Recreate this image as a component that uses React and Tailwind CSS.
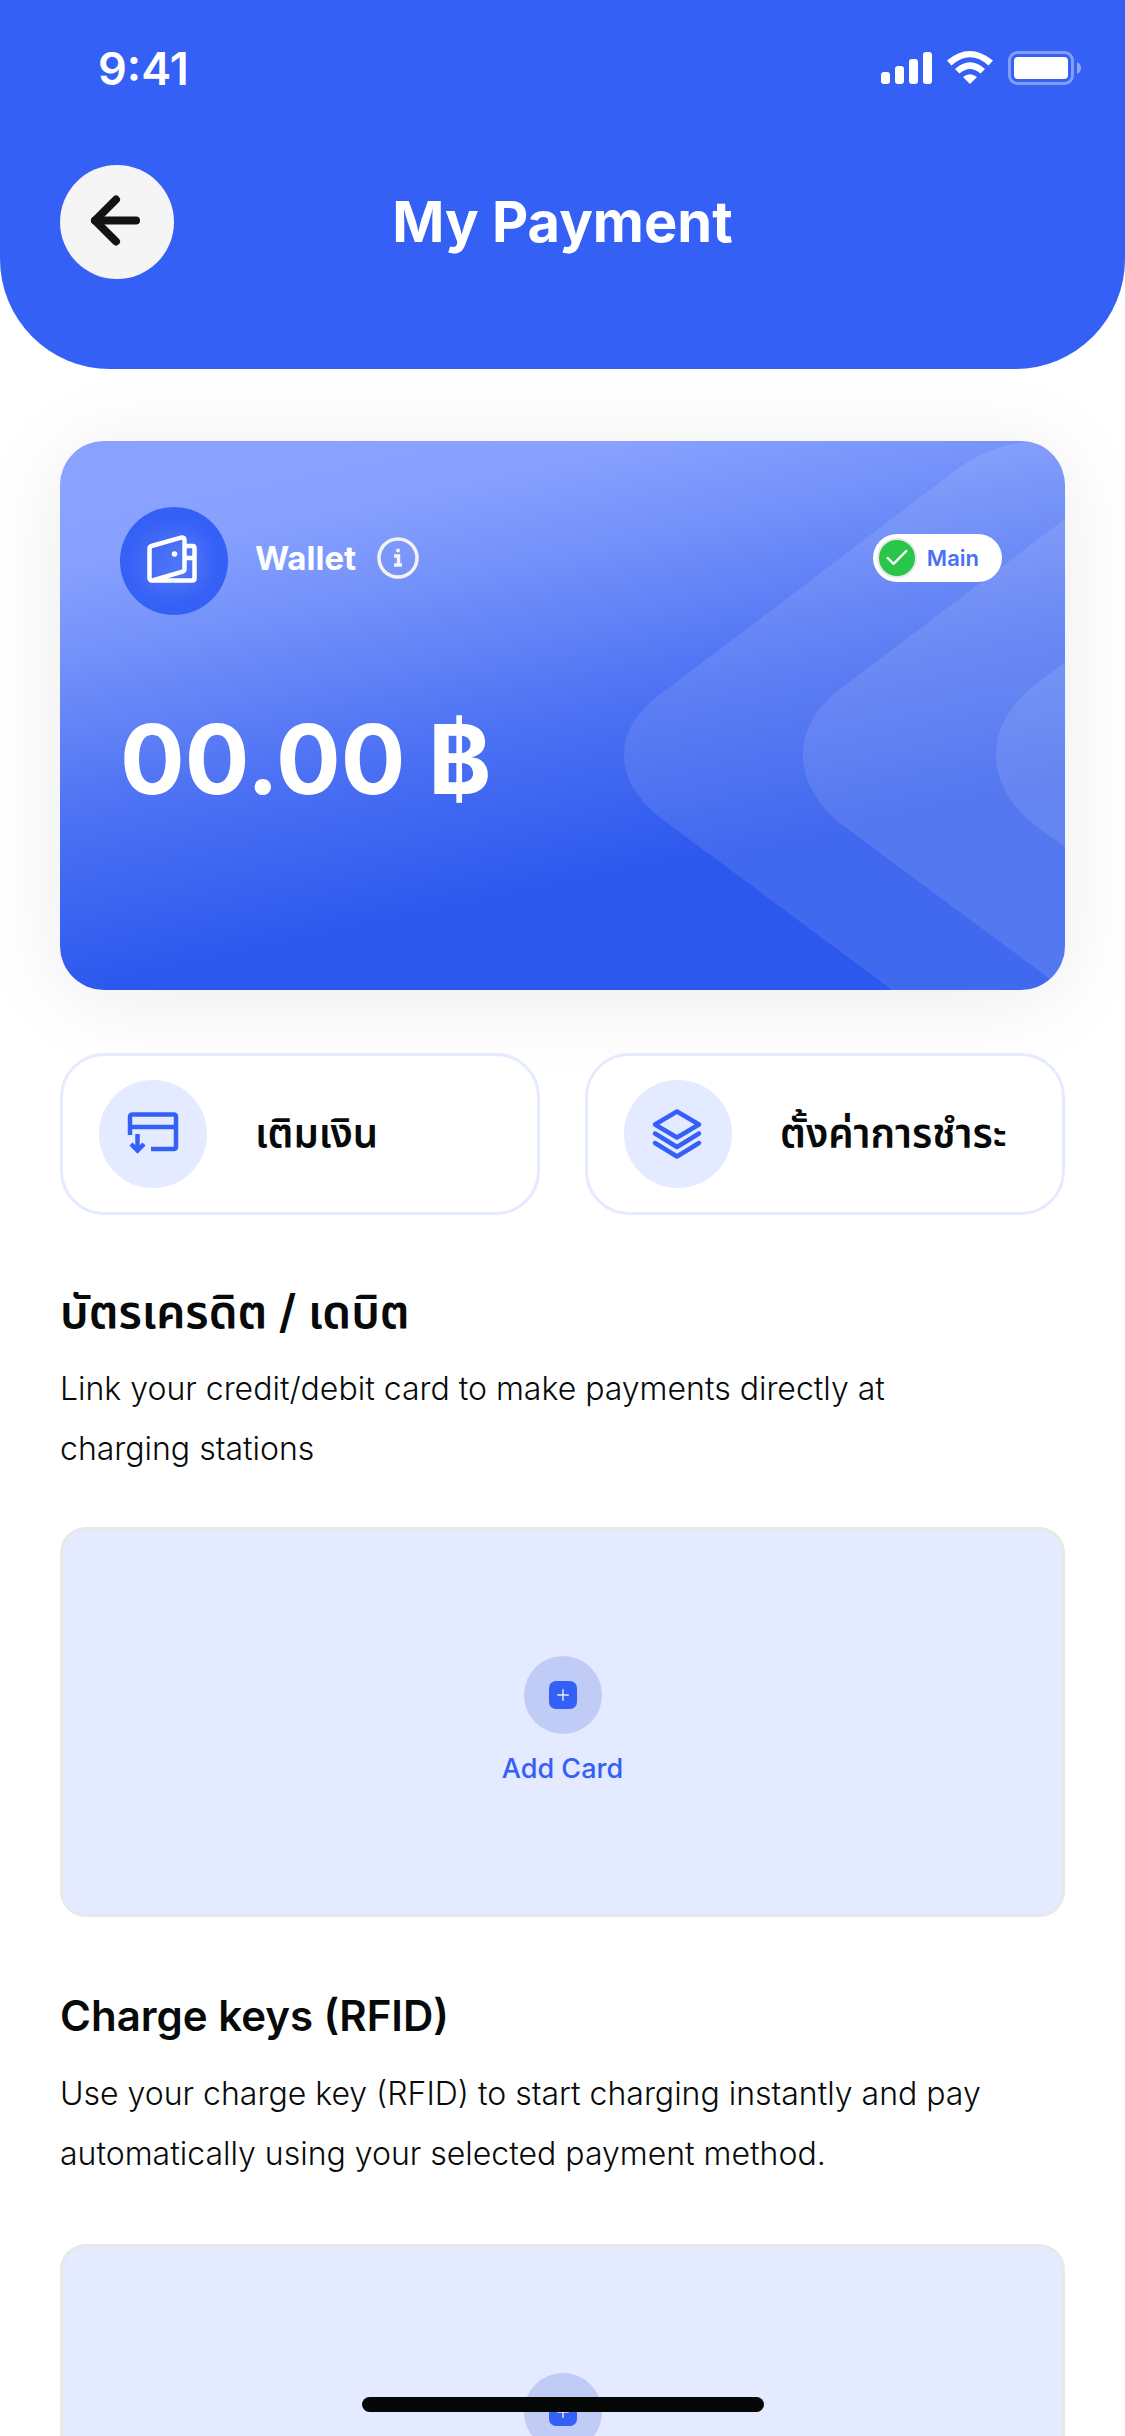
import { Check, Plus } from "lucide-react";

const sections = [
  {
    id: "cards",
    title: "บัตรเครดิต / เดบิต",
    titleSize: "text-[46px]",
    desc: ["Link your credit/debit card to make payments directly at", "charging stations"],
    action: "Add Card",
    gap: "mt-[48px]",
  },
  {
    id: "rfid",
    title: "Charge keys (RFID)",
    titleSize: "text-[42px]",
    desc: ["Use your charge key (RFID) to start charging instantly and pay", "automatically using your selected payment method."],
    action: "Add Card",
    gap: "mt-[60px]",
  },
];

function StatusBar() {
  return (
    <div className="flex h-[136px] items-center justify-between pl-[98px] pr-[42px] text-white">
      <span className="text-[45px] font-semibold leading-none">9:41</span>
      <svg width="202" height="36" viewBox="0 0 202 36" fill="currentColor" aria-hidden="true">
        <rect x="0" y="22" width="9" height="12" rx="3" />
        <rect x="14" y="16" width="9" height="18" rx="3" />
        <rect x="28" y="9" width="9" height="25" rx="3" />
        <rect x="42" y="2" width="9" height="32" rx="3" />
        <path d="M66 10.5Q88.500-8.500 112 10.500L107.500 15.500Q89-1 70.500 15.500Z" />
        <path d="M74 19Q89 5.500 104 19L99.500 23.500Q89 14.500 78.500 23.500Z" />
        <path d="M82 27Q89 21.500 96 27L89 34Z" />
        <rect x="128.500" y="2.500" width="63" height="31" rx="8" fill="none" stroke="currentColor" strokeWidth="3" opacity=".38" />
        <rect x="133" y="7" width="54" height="22" rx="4" />
        <path d="M196 12Q200 14 200 18Q200 22 196 24Z" opacity=".45" />
      </svg>
    </div>
  );
}

function BackIcon() {
  return (
    <svg width="114" height="114" viewBox="0 0 114 114" fill="none" stroke="#121414" strokeWidth="8" strokeLinecap="round" strokeLinejoin="round" aria-hidden="true">
      <path d="M76 55.500H35" />
      <path d="M56 34.500L35 55.500L56 76.500" />
    </svg>
  );
}

function WalletIcon() {
  return (
    <svg
      className="drop-shadow-[0_0_12px_rgba(255,255,255,0.4)]"
      width="54"
      height="54"
      viewBox="0 0 54 54"
      fill="none"
      stroke="currentColor"
      strokeWidth="4.500"
      strokeLinejoin="round"
      aria-hidden="true"
    >
      <path d="M2.500 14.500Q2.500 12.500 4.500 12L34 3.700Q37.500 3 37.500 6V35Q37.500 37 35.500 37.600L5.500 46.500Q2.500 47 2.500 44Z" />
      <path d="M37.500 12H45.500Q47.500 12 47.500 14V44.500Q47.500 46.500 45.500 46.500H5.500" />
      <path d="M37.500 24H47.500" />
      <circle cx="27.500" cy="20" r="2.800" fill="currentColor" stroke="none" />
    </svg>
  );
}

function TopUpIcon() {
  return (
    <svg width="54" height="54" viewBox="0 0 54 54" fill="none" stroke="currentColor" strokeWidth="4.500" aria-hidden="true">
      <path d="M4 28V10Q4 7.500 6.500 7.500H47.500Q50 7.500 50 10V39.500Q50 42 47.500 42H25" />
      <path d="M4 20H50" />
      <path d="M11.500 27V43" />
      <path d="M5 37L11.500 43.500L18 37" />
    </svg>
  );
}

function LayersIcon() {
  return (
    <svg width="54" height="54" viewBox="0 0 54 54" fill="none" stroke="currentColor" strokeWidth="4.500" strokeLinecap="round" strokeLinejoin="round" aria-hidden="true">
      <path d="M26 4.500L48 17.500L26 30.500L4 17.500Z" />
      <path d="M4 26.500L26 40L48 26.500" />
      <path d="M4 36L26 49.500L48 36" />
    </svg>
  );
}

function WalletCard() {
  return (
    <section className="relative h-[549px] overflow-hidden rounded-[44px] bg-[linear-gradient(168deg,#8aa2ff_0%,#88a1ff_16%,#7391fa_29%,#4c71f3_50%,#2c58ee_73%,#2c58ee_100%)] px-[60px] pt-[66px] text-white">
      <svg className="absolute inset-y-0 right-0 h-full" viewBox="0 0 1005 549" fill="#fff" fillOpacity=".1" aria-hidden="true">
        <path d="M1005 4Q945-8 896 29L610 246Q564 276 564 314Q564 352 610 384L832 549H1005Z" />
        <path d="M1005 78L781 247Q743 276 743 314Q743 352 781 383L1005 549Z" />
        <path d="M1005 221L973 245Q936 276 936 314Q936 352 973 383L1005 406Z" />
      </svg>
      <div className="relative flex items-center">
        <div className="flex size-[108px] items-center justify-center rounded-full bg-[#3560f6]">
          <WalletIcon />
        </div>
        <div className="flex flex-1 items-center pb-[6px] pl-[27px] pr-[3px]">
          <h2 className="text-[33px] font-bold leading-none">Wallet</h2>
          <button type="button" aria-label="Wallet info" className="ml-[21px]">
            <svg width="42" height="42" viewBox="0 0 42 42" fill="none" stroke="#f4f4f4" strokeWidth="3.500" aria-hidden="true">
              <circle cx="21" cy="21" r="19" />
              <circle cx="21" cy="13.500" r="2" fill="#f4f4f4" stroke="none" />
              <path d="M17 19H21.500V28M17 28H25" />
            </svg>
          </button>
          <div className="ml-auto flex h-[48px] items-center gap-[10px] rounded-full bg-white pl-[4px] pr-[23px]">
            <span className="flex size-[40px] items-center justify-center rounded-full border-2 border-[#e8e8e8] bg-[#2ac54b]">
              <Check size={28} strokeWidth={2} />
            </span>
            <span className="text-[22px] font-semibold leading-none text-[#4a70f5]">Main</span>
          </div>
        </div>
      </div>
      <p className="relative mt-[84px] text-[96px] font-bold leading-[120px]">00.00 ฿</p>
    </section>
  );
}

function ActionButton({ icon, label }) {
  return (
    <button type="button" className="flex h-[162px] items-center rounded-[44px] border-[3px] border-[#e4eaff] bg-white pl-[36px] text-left">
      <span className="flex size-[108px] shrink-0 items-center justify-center rounded-full bg-[#e4eaff] text-[#3560f6]">{icon}</span>
      <span className="ml-[48px] whitespace-nowrap text-[40px] font-semibold leading-[60px]">{label}</span>
    </button>
  );
}

function AddSection({ title, titleSize, desc, action, gap }) {
  return (
    <section>
      <h2 className={`${titleSize} font-semibold leading-[60px]`}>{title}</h2>
      <p className="mt-[18px] text-[32px] font-light leading-[60px]">
        {desc[0]}
        <br />
        {desc[1]}
      </p>
      <button
        type="button"
        className={`${gap} flex h-[390px] w-full flex-col items-center rounded-[26px] border-[3px] border-[#e8e8e8] bg-[#e4eaff] pt-[126px] text-[#3560f6]`}
      >
        <span className="flex size-[78px] items-center justify-center rounded-full bg-[#c0cbf6]">
          <span className="flex size-[28px] items-center justify-center rounded-[7px] bg-[#3560f6] text-[#e4eaff]">
            <Plus size={18} strokeWidth={2} />
          </span>
        </span>
        <span className="mt-[15px] text-[27px] font-medium leading-[40px]">{action}</span>
      </button>
    </section>
  );
}

export default function App() {
  return (
    <div className="relative h-screen overflow-hidden bg-white font-['Inter','Noto_Sans_Thai','Noto_Sans',sans-serif] text-[#080a0a]">
      <header className="h-[369px] rounded-b-[110px] bg-[#3560f6]">
        <StatusBar />
        <div className="mt-[29px] grid grid-cols-[114px_1fr_114px] items-center px-[60px]">
          <a href="#back" aria-label="Back" className="flex size-[114px] items-center justify-center rounded-full bg-[#f5f5f5]">
            <BackIcon />
          </a>
          <h1 className="text-center text-[56px] font-bold leading-[72px] text-white">My Payment</h1>
        </div>
      </header>

      <main className="px-[60px] pt-[72px]">
        <div className="rounded-[44px] shadow-[0_8px_90px_rgba(0,0,0,0.08)]">
          <WalletCard />
        </div>

        <div className="relative mt-[63px] grid grid-cols-2 gap-[45px]">
          <ActionButton icon={<TopUpIcon />} label="เติมเงิน" />
          <ActionButton icon={<LayersIcon />} label="ตั้งค่าการชำระ" />
        </div>

        <div className="mt-[66px] flex flex-col gap-[69px]">
          {sections.map((section) => (
            <AddSection key={section.id} {...section} />
          ))}
        </div>
      </main>

      {/* Home indicator */}
      <div className="absolute bottom-[24px] left-1/2 h-[15px] w-[402px] -translate-x-1/2 rounded-full bg-[#060808]" />
    </div>
  );
}
